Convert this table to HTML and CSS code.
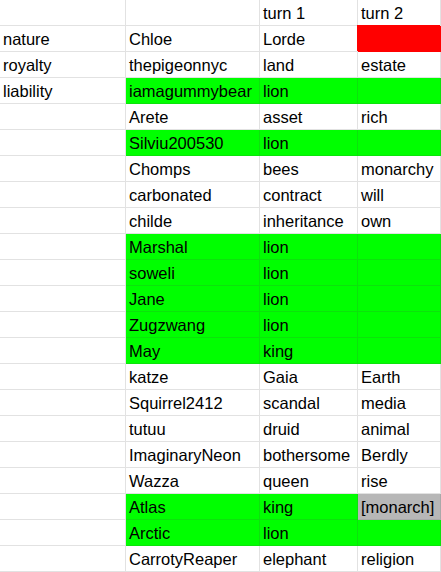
FILE: index.html
```html
<!DOCTYPE html>
<html>
<head>
<meta charset="utf-8">
<link rel="stylesheet" href="styles.css">
</head>
<body>
<div class="sheet">
  <div class="c"></div><div class="c"></div><div class="c">turn 1</div><div class="c">turn 2</div>
  <div class="c">nature</div><div class="c">Chloe</div><div class="c">Lorde</div><div class="c red"></div>
  <div class="c">royalty</div><div class="c">thepigeonnyc</div><div class="c">land</div><div class="c">estate</div>
  <div class="c">liability</div><div class="c g">iamagummybear</div><div class="c g">lion</div><div class="c g"></div>
  <div class="c"></div><div class="c">Arete</div><div class="c">asset</div><div class="c">rich</div>
  <div class="c"></div><div class="c g">Silviu200530</div><div class="c g">lion</div><div class="c g"></div>
  <div class="c"></div><div class="c">Chomps</div><div class="c">bees</div><div class="c">monarchy</div>
  <div class="c"></div><div class="c">carbonated</div><div class="c">contract</div><div class="c">will</div>
  <div class="c"></div><div class="c">childe</div><div class="c">inheritance</div><div class="c">own</div>
  <div class="c"></div><div class="c g">Marshal</div><div class="c g">lion</div><div class="c g"></div>
  <div class="c"></div><div class="c g">soweli</div><div class="c g">lion</div><div class="c g"></div>
  <div class="c"></div><div class="c g">Jane</div><div class="c g">lion</div><div class="c g"></div>
  <div class="c"></div><div class="c g">Zugzwang</div><div class="c g">lion</div><div class="c g"></div>
  <div class="c"></div><div class="c g">May</div><div class="c g">king</div><div class="c g"></div>
  <div class="c"></div><div class="c">katze</div><div class="c">Gaia</div><div class="c">Earth</div>
  <div class="c"></div><div class="c">Squirrel2412</div><div class="c">scandal</div><div class="c">media</div>
  <div class="c"></div><div class="c">tutuu</div><div class="c">druid</div><div class="c">animal</div>
  <div class="c"></div><div class="c">ImaginaryNeon</div><div class="c">bothersome</div><div class="c">Berdly</div>
  <div class="c"></div><div class="c">Wazza</div><div class="c">queen</div><div class="c">rise</div>
  <div class="c"></div><div class="c g">Atlas</div><div class="c g">king</div><div class="c gray">[monarch]</div>
  <div class="c"></div><div class="c g">Arctic</div><div class="c g">lion</div><div class="c g"></div>
  <div class="c"></div><div class="c">CarrotyReaper</div><div class="c">elephant</div><div class="c">religion</div>
</div>
</body>
</html>
```
FILE: styles.css
```css
html, body {
  margin: 0;
  padding: 0;
  background: #fff;
}
.sheet {
  display: grid;
  grid-template-columns: 126px 134px 98px 1fr;
  grid-auto-rows: 26px;
  width: 441px;
  font-family: "Liberation Sans", Arial, sans-serif;
  font-size: 16.5px;
  color: #000;
}
.c {
  box-sizing: border-box;
  border-right: 1px solid #e2e2e2;
  border-bottom: 1px solid #e2e2e2;
  padding: 1px 0 0 3px;
  line-height: 24px;
  white-space: nowrap;
  overflow: hidden;
}
.g {
  background: #00ff00;
  border-color: #0ce20c;
}
.red {
  background: #ff0000;
  border-color: #ff0000;
  overflow: visible;
  box-shadow: -1px -1px 0 #ff0000;
}
.gray {
  background: #b7b7b7;
  border-color: #a9a9a9;
}
```
